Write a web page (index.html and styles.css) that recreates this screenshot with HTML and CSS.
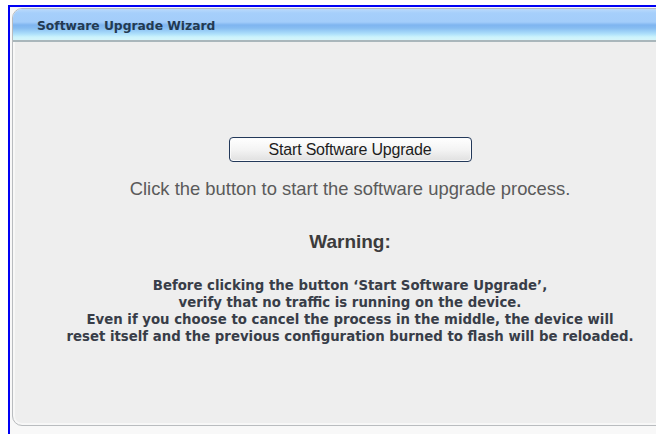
FILE: index.html
```html
<!DOCTYPE html>
<html>
<head>
<meta charset="utf-8">
<title>Software Upgrade Wizard</title>
<link rel="stylesheet" href="styles.css">
</head>
<body>
<div class="frame">
  <div class="panel">
    <div class="panel-head">Software Upgrade Wizard</div>
    <div class="panel-body">
      <button class="btn" type="button">Start Software Upgrade</button>
      <p class="hint">Click the button to start the software upgrade process.</p>
      <h2 class="warn-title">Warning:</h2>
      <p class="warn-text">Before clicking the button ‘Start Software Upgrade’,<br>verify that no traffic is running on the device.<br>Even if you choose to cancel the process in the middle, the device will<br>reset itself and the previous configuration burned to flash will be reloaded.</p>
    </div>
  </div>
</div>
</body>
</html>
```
FILE: styles.css
```css
html, body {
  margin: 0;
  padding: 0;
  background: #fff;
  height: 100%;
  overflow: hidden;
}

.frame {
  box-sizing: border-box;
  margin: 5px 0 0 8px;
  height: 429px;
  border-top: 2px solid #0000f4;
  border-left: 2px solid #0000f4;
  padding: 1px 0 0 2px;
  background: #f8f8f8;
  overflow: hidden;
}

/* the panel runs past the right edge of the frame */
.panel {
  box-sizing: border-box;
  width: 676px;
  height: 418px;
  border: 1px solid #b9bcbf;
  border-radius: 10px;
  background: #eeeeee;
  box-shadow: inset 0 0 0 2px #f7f7f7;
  overflow: hidden;
  display: flex;
  flex-direction: column;
}

.panel-head {
  flex: 0 0 auto;
  height: 33px;
  box-sizing: border-box;
  padding: 9px 0 0 24px;
  border-bottom: 2px solid #a9b6bb;
  background: linear-gradient(to bottom,
    #bad9fb 0px, #a6cffb 4px, #a3cdfa 13px, #7fb5f0 16px,
    #86bcf1 19px, #aee0fb 25px, #cbf3fc 28px, #d5f4fa 31px);
  font-family: "DejaVu Sans", Verdana, sans-serif;
  font-weight: bold;
  font-size: 12.3px;
  line-height: 16px;
  color: #233a52;
}

.panel-body {
  flex: 1 1 auto;
  display: flex;
  flex-direction: column;
  align-items: center;
  padding-top: 95px;
}

.btn {
  width: 243px;
  height: 25px;
  margin: 0;
  padding: 0;
  border: 1px solid #23395a;
  border-radius: 4px;
  background: linear-gradient(to bottom, #ffffff 0%, #f4f4f4 50%, #e0e0e0 100%);
  box-shadow: inset 0 0 0 1px #fbfbfb;
  font-family: "Liberation Sans", Arial, sans-serif;
  font-size: 16px;
  color: #1d1d1d;
  letter-spacing: -0.2px;
}

.hint {
  margin: 16px 0 0;
  font-family: "Liberation Sans", Arial, sans-serif;
  font-size: 18.4px;
  line-height: 22px;
  color: #5a5a5a;
}

.warn-title {
  margin: 31px 0 0;
  font-family: "Liberation Sans", Arial, sans-serif;
  font-size: 19px;
  font-weight: bold;
  line-height: 22px;
  color: #3c3c3c;
}

.warn-text {
  margin: 24px 0 0;
  text-align: center;
  font-family: "DejaVu Sans", Verdana, sans-serif;
  font-size: 13.3px;
  font-weight: bold;
  line-height: 17px;
  color: #383d48;
}
```
